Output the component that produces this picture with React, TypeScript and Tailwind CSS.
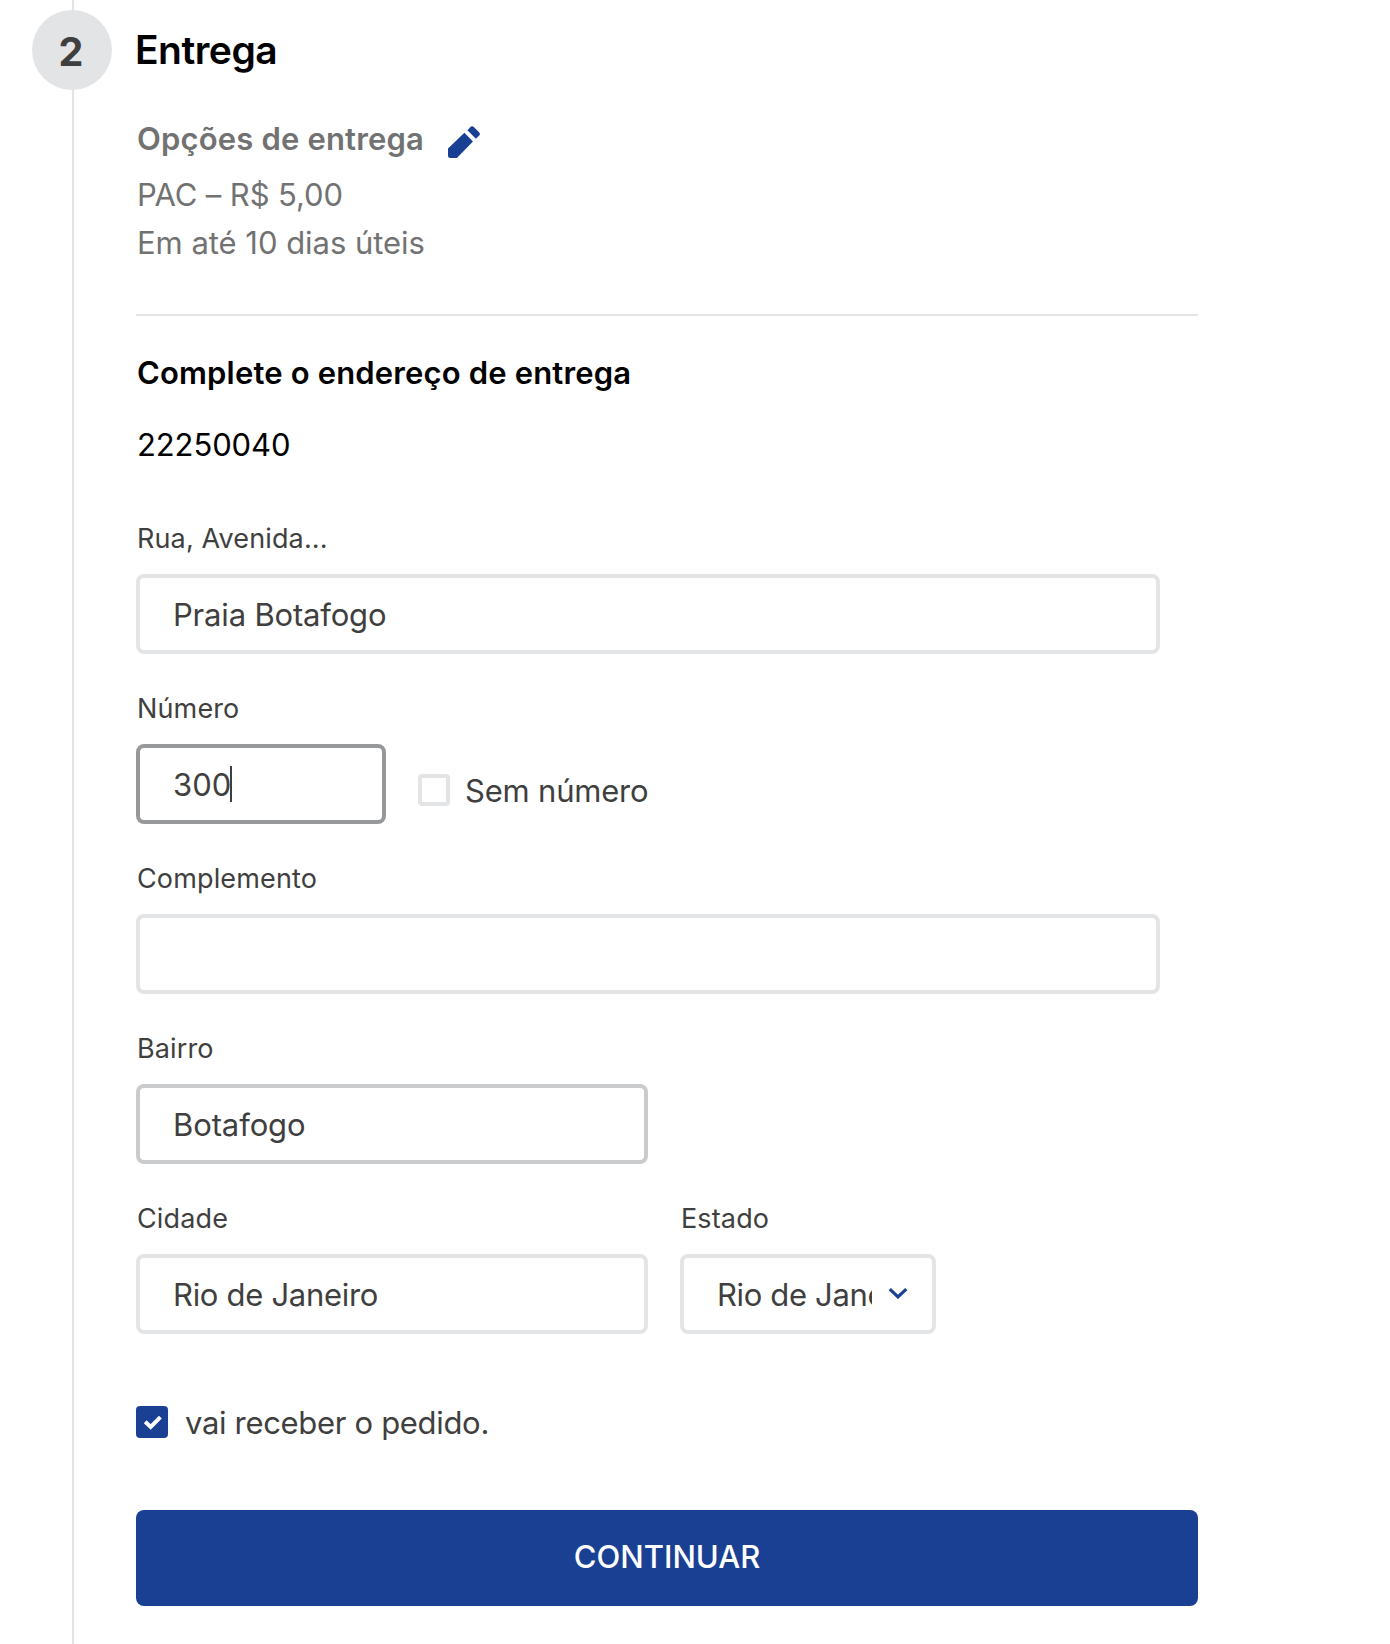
import type { ReactNode } from "react";
import clsx from "clsx";

function Box({ className, children }: { className?: string; children?: ReactNode }) {
  return (
    <div
      className={clsx(
        "flex h-20 items-center overflow-hidden rounded-lg border-4 pl-[33px] pt-px text-[31px] leading-[48px] whitespace-nowrap",
        className,
      )}
    >
      {children}
    </div>
  );
}

function Field({ label, children }: { label: string; children: ReactNode }) {
  return (
    <div>
      <div className="mb-3.5 h-[43px] pt-px pl-px text-[27px] leading-[42px] tracking-[0.14px]">{label}</div>
      {children}
    </div>
  );
}

function PencilIcon() {
  return (
    <svg width="32" height="32" viewBox="0 0 32 32" fill="#1a4093">
      <path d="M0 22.4 16.4 6.8 25 15.4 8.9 32H2.5Q0 32 0 29.5Z" />
      <path d="M19.4 4.2 22.4 1.1Q24.1-.6 25.8 1L31 6.2Q32.8 7.9 31 9.7L27.9 12.7Z" />
    </svg>
  );
}

export default function App() {
  return (
    <div className="flex h-[1644px] w-full overflow-hidden bg-white font-['Inter',sans-serif] text-[#3f3f40]">
      <div className="ml-8 flex w-20 shrink-0 flex-col">
        <div className="ml-10 h-2.5 w-0.5 bg-[#e3e4e6]" />
        <div className="flex size-20 items-center justify-center rounded-full bg-[#e3e4e6] pt-[5px] pr-[2px] text-[39.5px] leading-none font-bold">
          2
        </div>
        <div className="ml-10 w-0.5 flex-1 bg-[#e3e4e6]" />
      </div>

      <main className="ml-6 w-[1062px] shrink-0">
        <h2 className="mt-[25px] -ml-px h-[50px] text-[39px] leading-[50px] font-semibold tracking-[-0.5px] text-black">
          Entrega
        </h2>

        <section className="mt-10 pl-px text-[31px] leading-[48px] text-[#727273]">
          <div className="flex items-center">
            <h3 className="w-[311px] font-semibold tracking-[0.17px]">Opções de entrega</h3>
            <div className="mt-1.5">
              <PencilIcon />
            </div>
          </div>
          <p className="mt-2 tracking-[-0.1px]">PAC – R$ 5,00</p>
          <p className="tracking-[-0.03px]">Em até 10 dias úteis</p>
        </section>

        <hr className="mt-[47px] border-t-2 border-[#e3e4e6]" />

        <h3 className="mt-[33px] pl-px text-[31px] leading-[48px] font-semibold tracking-[0.16px] text-black">
          Complete o endereço de entrega
        </h3>
        <p className="mt-6 pl-px text-[31px] leading-[48px] tracking-[-0.1px] text-black">22250040</p>

        <form className="mt-12 flex flex-col gap-[33px]">
          <Field label="Rua, Avenida...">
            <Box className="w-[1024px] border-[#e3e4e6] tracking-[-0.18px]">Praia Botafogo</Box>
          </Field>
          <div className="flex">
            <Field label="Número">
              <Box className="w-[250px] border-[#979899]">
                300
                <span className="-mt-px -ml-px h-9 w-0.5 bg-[#3f3f40]" />
              </Box>
            </Field>
            <label className="mt-[79px] ml-8 flex h-12 items-center gap-[15px] text-[31px] leading-[48px] tracking-[-0.2px]">
              <span className="size-8 rounded border-4 border-[#e3e4e6]" />
              <span className="pt-0.5">Sem número</span>
            </label>
          </div>
          <Field label="Complemento">
            <Box className="w-[1024px] border-[#e3e4e6]" />
          </Field>
          <Field label="Bairro">
            <Box className="w-[512px] border-[#cacbcc] tracking-[-0.1px]">Botafogo</Box>
          </Field>
          <div className="flex gap-8">
            <Field label="Cidade">
              <Box className="w-[512px] border-[#e3e4e6] tracking-[-0.3px]">Rio de Janeiro</Box>
            </Field>
            <Field label="Estado">
              <Box className="w-64 border-[#e3e4e6] tracking-[-0.35px]">
                <span className="w-[155px] shrink-0 overflow-hidden">Rio de Janeiro</span>
                <svg className="-mt-[3px] ml-4 shrink-0" width="20" height="12" viewBox="0 0 20 12" fill="none">
                  <path d="M1.8 2.2 10 9.9 18.2 2.2" stroke="#1a4093" strokeWidth="3.2" />
                </svg>
              </Box>
            </Field>
          </div>
        </form>

        <label className="mt-[63px] flex h-[50px] items-center gap-[17px] text-[31px] leading-[48px] tracking-[-0.32px]">
          <span className="size-8 rounded bg-[#1a4093]">
            <svg width="32" height="32" viewBox="0 0 32 32" fill="none">
              <path d="M9.2 15.8 14.7 21 24.4 11.2" stroke="#fff" strokeWidth="4" />
            </svg>
          </span>
          <span className="pt-0.5">vai receber o pedido.</span>
        </label>

        <button className="mt-[63px] flex h-24 w-full items-center justify-center rounded-lg bg-[#1a4093] pb-0.5 text-[31px] leading-[48px] font-medium text-white">
          CONTINUAR
        </button>
      </main>
    </div>
  );
}
